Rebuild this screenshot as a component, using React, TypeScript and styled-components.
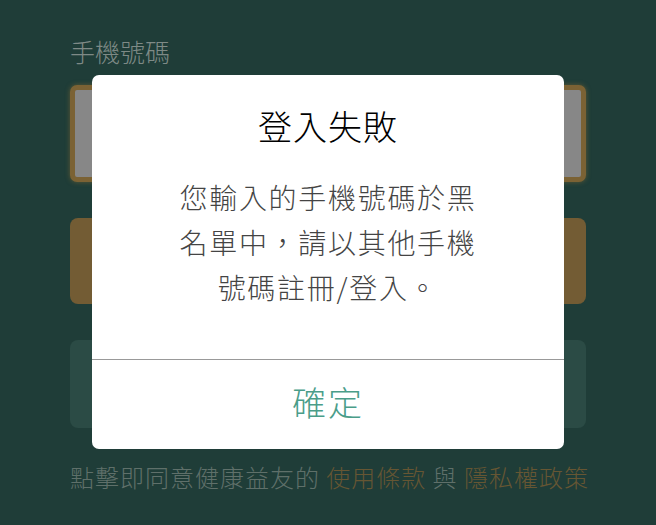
import styled, { createGlobalStyle } from "styled-components";

const GlobalStyle = createGlobalStyle`
  html, body {
    margin: 0;
    padding: 0;
    background-color: #1f3d38;
  }
  body {
    font-family: "Noto Sans CJK TC", "Noto Sans", sans-serif;
    font-weight: 300;
  }
`;

const Page = styled.div`
  position: relative;
  width: 656px;
  height: 525px;
  box-sizing: border-box;
  padding: 36px 70px 0 70px;
  background-color: #1f3d38;
  display: flex;
  flex-direction: column;
  overflow: hidden;
`;

const Label = styled.div`
  font-size: 25px;
  line-height: 30px;
  color: #7e8a86;
  margin-bottom: 19px;
`;

const PhoneInput = styled.div`
  height: 97px;
  box-sizing: border-box;
  border: 5px solid #7b6234;
  border-radius: 7px;
  background-color: #878787;
  box-shadow: 0 0 5px rgba(150, 115, 50, 0.55);
`;

const Block = styled.div<{ $bg: string; $h: number }>`
  height: ${(p) => p.$h}px;
  border-radius: 8px;
  background-color: ${(p) => p.$bg};
  margin-top: 36px;
`;

const Footer = styled.div`
  margin-top: 34px;
  font-size: 24px;
  line-height: 30px;
  letter-spacing: 1px;
  color: #5f706a;
  white-space: nowrap;
`;

const FooterLink = styled.span`
  color: #665633;
`;

const Overlay = styled.div`
  position: absolute;
  inset: 0;
  display: flex;
  align-items: center;
  justify-content: center;
`;

const Dialog = styled.div`
  width: 472px;
  height: 374px;
  margin-top: -2px;
  background-color: #ffffff;
  border-radius: 7px;
  display: flex;
  flex-direction: column;
  overflow: hidden;
`;

const DialogBody = styled.div`
  flex: 1;
  padding: 31px 80px 0 80px;
  display: flex;
  flex-direction: column;
  align-items: center;
`;

const Title = styled.h2`
  margin: 0;
  font-size: 34px;
  line-height: 40px;
  font-weight: 300;
  letter-spacing: 1px;
  color: #000000;
`;

const Message = styled.p`
  margin: 29px 0 0 0;
  font-size: 28px;
  line-height: 45px;
  letter-spacing: 1.7px;
  color: #444444;
  text-align: center;
`;

const ConfirmButton = styled.button`
  height: 90px;
  border: none;
  border-top: 1px solid #999999;
  background: transparent;
  font-family: inherit;
  font-weight: 300;
  font-size: 34px;
  letter-spacing: 2px;
  color: #4a9d89;
  cursor: pointer;
  padding: 0 0 6px 0;
`;

function App() {
  return (
    <>
      <GlobalStyle />
      <Page>
        <Label>手機號碼</Label>
        <PhoneInput />
        <Block $bg="#735c34" $h={86} />
        <Block $bg="#2b4b45" $h={88} />
        <Footer>
          點擊即同意健康益友的 <FooterLink>使用條款</FooterLink> 與{" "}
          <FooterLink>隱私權政策</FooterLink>
        </Footer>
        <Overlay>
          <Dialog>
            <DialogBody>
              <Title>登入失敗</Title>
              <Message>您輸入的手機號碼於黑名單中，請以其他手機號碼註冊/登入。</Message>
            </DialogBody>
            <ConfirmButton>確定</ConfirmButton>
          </Dialog>
        </Overlay>
      </Page>
    </>
  );
}

export default App;
